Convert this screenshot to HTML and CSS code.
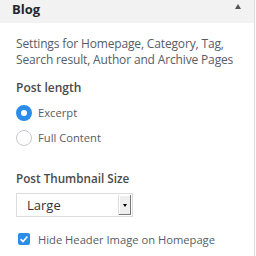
FILE: index.html
```html
<!DOCTYPE html>
<html>
<head>
<meta charset="utf-8">
<link rel="stylesheet" href="styles.css">
</head>
<body>
<div class="panel">
  <div class="header">
    <span class="title">Blog</span>
    <span class="arrow"></span>
  </div>
  <div class="content">
    <p class="desc">Settings for Homepage, Category, Tag,<br>Search result, Author and Archive Pages</p>
    <div class="label">Post length</div>
    <label class="radio-row first"><span class="radio checked"></span>Excerpt</label>
    <label class="radio-row"><span class="radio"></span>Full Content</label>
    <div class="label label-gap">Post Thumbnail Size</div>
    <div class="select"><span class="select-text">Large</span><span class="select-btn"><span class="select-tri"></span></span></div>
    <label class="check-row"><span class="check"><svg width="12" height="12" viewBox="0 0 12 12"><path d="M2.6 6.2 L5 8.5 L9.4 3.4" fill="none" stroke="#fff" stroke-width="1.6"/></svg></span>Hide Header Image on Homepage</label>
  </div>
</div>
</body>
</html>
```
FILE: styles.css
```css
html, body { margin: 0; padding: 0; background: #fff; }
body { font-family: "Open Sans", sans-serif; color: #555d66; width: 256px; height: 256px; overflow: hidden; }
.panel { width: 254px; border-right: 1px solid #dcdcdc; height: 256px; }
.header { height: 23px; background: #f2f2f2; display: flex; align-items: flex-start; justify-content: space-between; padding: 2px 13px 0 12px; box-sizing: border-box; }
.title { font-size: 13px; font-weight: 700; color: #23282d; line-height: 15px; }
.arrow { width: 0; height: 0; border-left: 3.5px solid transparent; border-right: 3.5px solid transparent; border-bottom: 5px solid #555; margin-top: 2px; }
.content { padding: 13px 0 0 16px; }
.desc { margin: 0; font-size: 12px; line-height: 16px; white-space: nowrap; letter-spacing: -0.15px; }
.label { font-size: 12px; font-weight: 600; color: #4a4a4a; margin-top: 11px; line-height: 18px; }
.label-gap { margin-top: 19px; font-size: 11.7px; }
.radio-row { display: flex; align-items: center; font-size: 11.2px; height: 25px; color: #555d66; }
.radio-row.first { margin-top: 3px; }
.radio { width: 16px; height: 16px; border-radius: 50%; border: 1px solid #c3c7cb; box-sizing: border-box; margin: 0 6px 0 0; background: #fff; }
.radio.checked { border: 5px solid #2b8de9; }
.select { margin-top: 6px; width: 117px; height: 24px; border: 1px solid #dcdcdc; box-sizing: border-box; display: flex; align-items: center; justify-content: space-between; background: #fff; }
.select-text { font-size: 13px; color: #333; padding-left: 10px; }
.select-btn { width: 12px; height: 20px; margin-right: 1px; background: #eee; box-shadow: inset -1px -1px 0 #777, inset 1px 1px 0 #fff; border-left: 1px solid #ddd; display: flex; align-items: center; justify-content: center; }
.select-tri { width: 0; height: 0; border-left: 2.5px solid transparent; border-right: 2.5px solid transparent; border-top: 3px solid #000; }
.check-row { display: flex; align-items: center; font-size: 11.2px; margin-top: 14px; height: 16px; }
.check { width: 12px; height: 12px; background: #2b8de9; border-radius: 2px; margin: 0 8px 0 2px; display: flex; align-items: center; justify-content: center; }
```
